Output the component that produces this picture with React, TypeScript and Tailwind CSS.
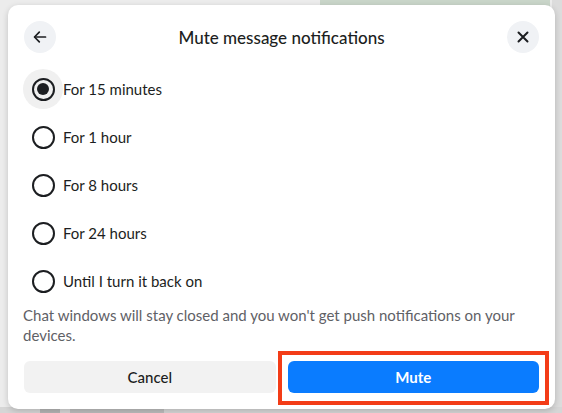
import React, { useState } from 'react';

const options = [
  'For 15 minutes',
  'For 1 hour',
  'For 8 hours',
  'For 24 hours',
  'Until I turn it back on',
];

const BackIcon = () => (
  <svg width="16" height="16" viewBox="0 0 16 16" fill="none" stroke="#1c1e21" strokeWidth="1.7" strokeLinecap="round" strokeLinejoin="round">
    <path d="M13.5 8H2.8" />
    <path d="M7.3 3.2 2.5 8l4.8 4.8" />
  </svg>
);

const CloseIcon = () => (
  <svg width="14" height="14" viewBox="0 0 14 14" fill="none" stroke="#1c1e21" strokeWidth="2" strokeLinecap="round">
    <path d="M2.5 2.5l9 9M11.5 2.5l-9 9" />
  </svg>
);

export default function App() {
  const [selected, setSelected] = useState(0);

  return (
    <div
      className="relative w-[562px] h-[413px] overflow-hidden bg-[#ececec]"
      style={{ fontFamily: 'Lato, "Noto Sans", Arial, sans-serif' }}
    >
      {/* blurred page behind the dialog */}
      <div className="absolute left-[320px] top-0 w-[230px] h-[8px] bg-[#c9d5c9]" />
      <div className="absolute right-0 top-0 w-[10px] h-[413px] bg-[#dcdcdc]" />
      <div className="absolute left-0 bottom-0 w-[562px] h-[6px] bg-[#d6d6d6]" />
      <div className="absolute left-[40px] bottom-0 w-[20px] h-[5px] bg-[#b5b5b5]" />
      <div className="absolute left-[70px] bottom-0 w-[94px] h-[5px] bg-[#bdbdbd]" />

      <div className="relative pl-[8px] pt-[5px]">
        <div className="w-[547px] bg-white rounded-[10px] p-4 shadow-[0_2px_6px_rgba(0,0,0,0.18)]">
          {/* Header */}
          <div className="flex items-center justify-between h-8">
            <button className="w-8 h-8 rounded-full bg-[#f0f2f5] flex items-center justify-center">
              <BackIcon />
            </button>
            <h1 className="text-[17px] font-medium text-[#1c1e21] leading-none">Mute message notifications</h1>
            <button className="w-8 h-8 rounded-full bg-[#f0f2f5] flex items-center justify-center">
              <CloseIcon />
            </button>
          </div>

          {/* Options */}
          <div className="mt-3 flex flex-col">
            {options.map((label, i) => (
              <div
                key={label}
                className="h-12 flex items-center -ml-px cursor-pointer"
                onClick={() => setSelected(i)}
              >
                <div
                  className={`w-10 h-10 rounded-full flex items-center justify-center ${
                    i === selected ? 'bg-[#f0f0f0]' : ''
                  }`}
                >
                  <div className="w-[23px] h-[23px] rounded-full border-2 border-[#1c1e21] flex items-center justify-center">
                    {i === selected && <div className="w-[12px] h-[12px] rounded-full bg-[#1c1e21]" />}
                  </div>
                </div>
                <span className="text-[15px] text-[#1c1e21]">{label}</span>
              </div>
            ))}
          </div>

          {/* Description */}
          <p className="-ml-px text-[15px] leading-5 text-[#5f6166]">
            Chat windows will stay closed and you won't get push notifications on your devices.
          </p>

          {/* Actions */}
          <div className="mt-4 flex gap-3">
            <button className="flex-1 h-8 rounded-md bg-[#f2f2f2] text-[15px] font-medium text-[#1c1e21]">
              Cancel
            </button>
            <div className="flex-1 relative">
              <div className="absolute -left-[10px] -right-[10px] -top-[10px] -bottom-[12px] border-4 border-[#f33c17]" />
              <button className="relative w-full h-8 rounded-md bg-[#0a7cff] text-[15px] font-bold text-white">
                Mute
              </button>
            </div>
          </div>
        </div>
      </div>
    </div>
  );
}
